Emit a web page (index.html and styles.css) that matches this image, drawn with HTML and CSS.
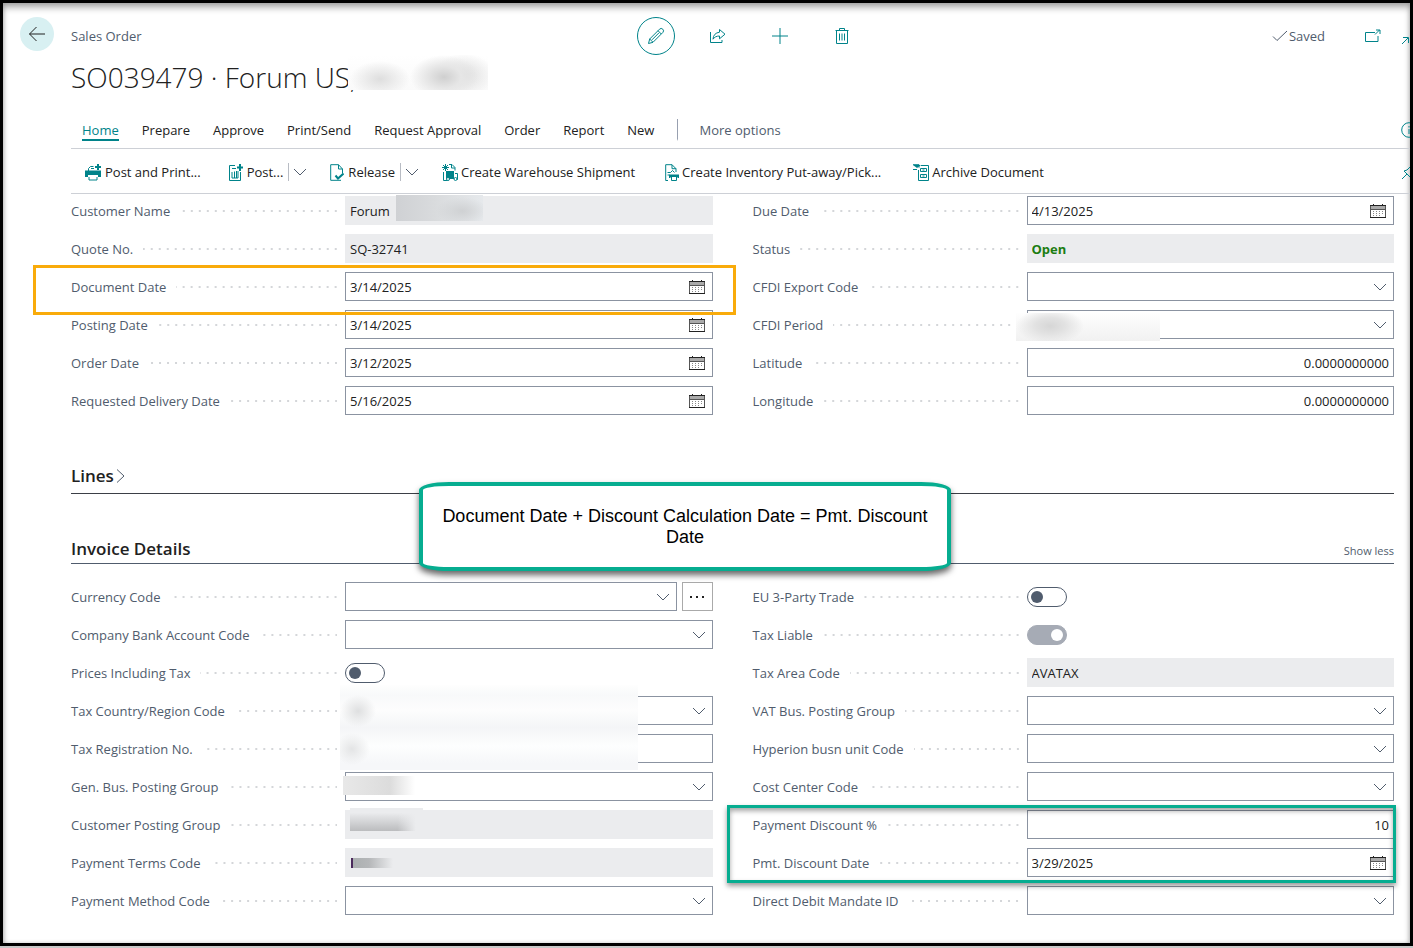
FILE: index.html
```html
<!DOCTYPE html>
<html lang="en">
<head>
<meta charset="utf-8">
<title>Sales Order</title>
<link rel="stylesheet" href="styles.css">
</head>
<body>
<svg class="sprite" aria-hidden="true">
  <symbol id="chevron" viewBox="0 0 14 8"><path d="M1 1l6 6 6-6"/></symbol>
  <symbol id="calendar" viewBox="0 0 16 16"><path d="M.5 2.500v12M15.500 2.500v12" stroke="#555"/><path d="M0 2.500h16M0 14.500h16M3.500 1v3M12.500 1v3"/><path d="M1 4.500h14" stroke="#aaa" stroke-width="3"/><path d="M1 6.500h14" stroke="#555"/><path d="M3 8.500h11M3 10.500h11M3 12.500h8" stroke="#888" stroke-dasharray="1 2"/></symbol>
</svg>
<div class="frame">
  <div class="rail">
    <button class="back" aria-label="Back"><svg width="18" height="16" viewBox="0 0 18 16"><path d="M17 8H1.500M8.500 1L1.500 8l7 7"/></svg></button>
  </div>
  <main class="page">
    <header class="topbar">
      <span class="crumb">Sales Order</span>
      <div class="actions">
        <button class="round" aria-label="Edit"><svg width="18" height="18" viewBox="0 0 18 18"><path d="M1.500 16.500l1.200-4.500L12.500 2.200a2.300 2.300 0 0 1 3.300 3.300L6 15.300zM2.700 12L6 15.300M11 3.700L14.300 7M5 12.800l7-7"/></svg></button>
        <button aria-label="Share"><svg width="18" height="16" viewBox="0 0 18 16"><path d="M1.500 4v10.500h11.500V12M10.500 1.500l5.500 4.700-5.500 4.600V8C7.500 8 5.500 9 4 11.200c.2-4 2.500-6.500 6.500-7z"/></svg></button>
        <button aria-label="New"><svg width="16" height="16" viewBox="0 0 16 16"><path d="M8 0v16M0 8h16"/></svg></button>
        <button aria-label="Delete"><svg width="14" height="18" viewBox="0 0 14 18"><path d="M.5 3.500h13M4.500 3.500v-2h5v2M1.500 3.500v13h11v-13M4.500 6.500v7M7 6.500v7M9.500 6.500v7"/></svg></button>
      </div>
      <div class="state">
        <span class="saved"><svg width="16" height="12" viewBox="0 0 16 12"><path d="M1 6.500l4 4L15 1"/></svg>Saved</span>
        <button class="pop" aria-label="Open in new window"><svg width="16" height="14" viewBox="0 0 16 14"><path d="M10 3.500H.5v9h12.500V7M10 5.500l4.500-4.500M11 1h4v4"/></svg></button>
        <button class="grow" aria-label="Expand"><svg width="16" height="16" viewBox="0 0 16 16"><path d="M1 14l6-6M2 7.500h5.500V13"/></svg></button>
      </div>
    </header>
    <h1 class="title">SO039479 · Forum US,<span class="smudge smudge-title"></span></h1>
    <nav class="tabs">
      <a class="on" href="#">Home</a><a href="#">Prepare</a><a href="#">Approve</a><a href="#">Print/Send</a><a href="#">Request Approval</a><a href="#">Order</a><a href="#">Report</a><a href="#">New</a><a class="more" href="#">More options</a>
      <button class="edge" aria-label="Details"><svg width="16" height="16" viewBox="0 0 16 16"><circle cx="8" cy="8" r="7.300"/><path d="M8 7v5M8 4v1.500"/></svg></button>
    </nav>
    <div class="toolbar">
      <button class="t1"><svg width="16" height="17" viewBox="0 0 16 17"><path class="solid" d="M0 6.500h16v6.500h-3v-2H3v2H0z"/><path d="M3.500 7V4.500l2-2h3M4 13v3h8v-3M6 4.500h3"/><path d="M13 0v6M10 3h6" stroke-width="2"/></svg>Post and Print...</button>
      <button class="t2"><svg width="14" height="17" viewBox="0 0 14 17"><path d="M6 1.500H.5v15h11V8M3 4.500h4M3 8v6h6V7M5.500 14V7.500M7.500 14V7"/><path d="M11 0v7M8 3.500h6" stroke-width="2"/></svg>Post...</button>
      <button class="split" aria-label="More posting options"><svg width="14" height="8"><use href="#chevron"/></svg></button>
      <button class="t3"><svg width="14" height="17" viewBox="0 0 14 17"><path d="M12.500 9V5L8.500.700H.700v15.600H11M8.500.700V5h4"/><path d="M5.500 11.500l2.500 3 5.500-5" stroke-width="2"/></svg>Release</button>
      <button class="split" aria-label="More release options"><svg width="14" height="8"><use href="#chevron"/></svg></button>
      <button class="t4"><svg width="16" height="17" viewBox="0 0 16 17"><path d="M3.500 0v7M0 3.500h7M1 1l5 5M6 1L1 6M7 .500h3l3 3v3M9.500.500V4H13M1.500 8v8.500h4M13 9.500h2.500v6H13"/><path class="solid" d="M4 7h8v8H4z"/><circle class="hole" cx="6" cy="15" r="1.500"/><circle class="hole" cx="13.500" cy="15" r="1.500"/></svg>Create Warehouse Shipment</button>
      <button class="t5"><svg width="14" height="17" viewBox="0 0 14 17"><path d="M3 16.500H.700V.700H7l4 4V8M7 .700v4h4M2.500 8.500h3l2-2 2 2M2.500 11h2M6.500 13v3.500h5V13"/><path class="solid" d="M4 10.500h10V14h-1.500v-1h-7v1H4z"/></svg>Create Inventory Put-away/Pick...</button>
      <button class="t6"><svg width="16" height="17" viewBox="0 0 16 17"><path d="M5.500 6v10.500h10V1.500H8M7.500 4.500h6v3h-6zM7.500 10.500h6v3h-6zM9.500 6h2M9.500 12h2M0 5.500h4M0 .700h6v3"/><path class="solid" d="M0 1l4 3 4-3z"/></svg>Archive Document</button>
      <button class="edge pin" aria-label="Pin"><svg width="16" height="16" viewBox="0 0 16 16"><path d="M1 15l5-5M3 7l6 6M3 7l3-1 4-4M9 13l1-3 4-4M9 1l6 6"/></svg></button>
    </div>

    <section class="body">
      <div class="columns first">
        <div class="col">
          <div class="row"><label for="cust">Customer Name</label><div class="field"><input id="cust" class="ro" value="Forum" readonly><span class="smudge smudge-cust"></span></div></div>
          <div class="row"><label for="quote">Quote No.</label><div class="field"><input id="quote" class="ro" value="SQ-32741" readonly></div></div>
          <div class="row mark-orange"><label for="docd">Document Date</label><div class="field"><input id="docd" value="3/14/2025"><svg class="cal"><use href="#calendar"/></svg></div></div>
          <div class="row"><label for="postd">Posting Date</label><div class="field"><input id="postd" value="3/14/2025"><svg class="cal"><use href="#calendar"/></svg></div></div>
          <div class="row"><label for="ordd">Order Date</label><div class="field"><input id="ordd" value="3/12/2025"><svg class="cal"><use href="#calendar"/></svg></div></div>
          <div class="row"><label for="reqd">Requested Delivery Date</label><div class="field"><input id="reqd" value="5/16/2025"><svg class="cal"><use href="#calendar"/></svg></div></div>
        </div>
        <div class="col">
          <div class="row"><label for="due">Due Date</label><div class="field"><input id="due" value="4/13/2025"><svg class="cal"><use href="#calendar"/></svg></div></div>
          <div class="row"><label for="status">Status</label><div class="field"><input id="status" class="ro open" value="Open" readonly></div></div>
          <div class="row"><label for="cfdi">CFDI Export Code</label><div class="field"><select id="cfdi"></select><svg class="chev"><use href="#chevron"/></svg></div></div>
          <div class="row"><label for="per">CFDI Period</label><div class="field"><select id="per"></select><svg class="chev"><use href="#chevron"/></svg><span class="smudge smudge-period"></span></div></div>
          <div class="row"><label for="lat">Latitude</label><div class="field"><input id="lat" class="num" value="0.0000000000"></div></div>
          <div class="row"><label for="lon">Longitude</label><div class="field"><input id="lon" class="num" value="0.0000000000"></div></div>
        </div>
      </div>

      <div class="lines">
        <h2>Lines<svg width="10" height="16" viewBox="0 0 10 16"><path d="M1 1.500L8 8l-7 6.500"/></svg></h2>
        <p class="callout">Document Date + Discount Calculation Date = Pmt. Discount Date</p>
      </div>
      <div class="invoice"><h2>Invoice Details</h2><button>Show less</button></div>

      <div class="columns">
        <div class="col">
          <div class="row"><label for="cur">Currency Code</label><div class="field with-more"><div class="pick"><select id="cur"></select><svg class="chev"><use href="#chevron"/></svg></div><button class="dots" aria-label="Assist edit"><svg width="16" height="4" viewBox="0 0 16 4"><path d="M1 2h2M7 2h2M13 2h2" stroke-width="2"/></svg></button></div></div>
          <div class="row"><label for="bank">Company Bank Account Code</label><div class="field"><select id="bank"></select><svg class="chev"><use href="#chevron"/></svg></div></div>
          <div class="row"><label for="pit">Prices Including Tax</label><div class="field"><input id="pit" type="checkbox" class="switch"></div></div>
          <div class="row"><label for="tcr">Tax Country/Region Code</label><div class="field"><select id="tcr"></select><svg class="chev"><use href="#chevron"/></svg><span class="smudge smudge-tax"></span></div></div>
          <div class="row"><label for="trn">Tax Registration No.</label><div class="field"><input id="trn"></div></div>
          <div class="row"><label for="gbp">Gen. Bus. Posting Group</label><div class="field"><select id="gbp"></select><svg class="chev"><use href="#chevron"/></svg><span class="smudge smudge-gen"></span></div></div>
          <div class="row"><label for="cpg">Customer Posting Group</label><div class="field"><input id="cpg" class="ro" readonly><span class="smudge smudge-group"></span></div></div>
          <div class="row"><label for="ptc">Payment Terms Code</label><div class="field"><input id="ptc" class="ro" readonly><span class="smudge smudge-terms"></span></div></div>
          <div class="row"><label for="pmc">Payment Method Code</label><div class="field"><select id="pmc"></select><svg class="chev"><use href="#chevron"/></svg></div></div>
        </div>
        <div class="col">
          <div class="row"><label for="eu">EU 3-Party Trade</label><div class="field"><input id="eu" type="checkbox" class="switch"></div></div>
          <div class="row"><label for="tl">Tax Liable</label><div class="field"><input id="tl" type="checkbox" class="switch" checked disabled></div></div>
          <div class="row"><label for="tac">Tax Area Code</label><div class="field"><input id="tac" class="ro" value="AVATAX" readonly></div></div>
          <div class="row"><label for="vat">VAT Bus. Posting Group</label><div class="field"><select id="vat"></select><svg class="chev"><use href="#chevron"/></svg></div></div>
          <div class="row"><label for="hyp">Hyperion busn unit Code</label><div class="field"><select id="hyp"></select><svg class="chev"><use href="#chevron"/></svg></div></div>
          <div class="row"><label for="cc">Cost Center Code</label><div class="field"><select id="cc"></select><svg class="chev"><use href="#chevron"/></svg></div></div>
          <div class="col mark-green">
            <div class="row"><label for="pd">Payment Discount %</label><div class="field"><input id="pd" class="num" value="10"></div></div>
            <div class="row"><label for="pdd">Pmt. Discount Date</label><div class="field"><input id="pdd" value="3/29/2025"><svg class="cal"><use href="#calendar"/></svg></div></div>
          </div>
          <div class="row"><label for="ddm">Direct Debit Mandate ID</label><div class="field"><select id="ddm"></select><svg class="chev"><use href="#chevron"/></svg></div></div>
        </div>
      </div>
    </section>
  </main>
</div>
</body>
</html>
```
FILE: styles.css
```css
* { box-sizing: border-box; }
body {
  margin: 0;
  background: #c8c8c8;
  color: #212121;
  font-family: "Open Sans", "Noto Sans", sans-serif;
  font-size: 13px;
  line-height: 20px;
}
button, input, select { font: inherit; color: inherit; }
button { margin: 0; padding: 0; border: 0; background: none; }
svg { display: block; flex: none; fill: none; stroke: currentColor; stroke-width: 1; }
.sprite { position: absolute; width: 0; height: 0; }
.solid { fill: currentColor; stroke: none; }
.hole { fill: #fff; }

.frame {
  display: flex;
  min-height: calc(100vh - 2px);
  margin-bottom: 2px;
  padding-top: 14px;
  border: 3px solid #000;
  background: #fff;
  box-shadow: inset 0 5px 6px rgba(0, 0, 0, .3), inset 0 0 4px rgba(0, 0, 0, .2);
  overflow: hidden;
}
.rail { flex: none; width: 68px; padding-left: 17px; }
.back {
  display: grid;
  place-items: center;
  width: 34px;
  height: 34px;
  border-radius: 50%;
  background: #d8f0f2;
}
.page { flex: 1; min-width: 0; }

.topbar { display: flex; align-items: center; height: 38px; color: #505c6d; }
.crumb { flex: 1 1 0; }
.actions { display: flex; gap: 24px; margin-left: 9px; color: #00838a; }
.actions button { display: grid; place-items: center; width: 38px; height: 38px; }
.actions .round { border: 1px solid #00838a; border-radius: 50%; }
.state { display: flex; flex: 1 1 0; align-items: center; justify-content: flex-end; margin-right: -7px; }
.saved { display: flex; align-items: center; gap: 1px; }
.pop, .grow, .edge { color: #00838a; }
.pop { margin: 0 20px 0 40px; }
.grow { padding-top: 4px; }

.title {
  display: flex;
  align-items: center;
  height: 44px;
  margin: 0;
  font-size: 28px;
  font-weight: 300;
  line-height: 42px;
}

.tabs {
  display: flex;
  align-items: center;
  gap: 23px;
  height: 37px;
  margin-top: 13px;
  padding-left: 11px;
  border-bottom: 1px solid #cdd0d6;
}
.tabs a { color: inherit; text-decoration: none; border-bottom: 2px solid transparent; line-height: 18px; padding-top: 2px; }
.tabs .on { color: #00838a; border-color: #00838a; }
.tabs .more { padding-left: 21px; border-left: 1px solid #98a0b0; color: #505c6d; }
.edge { margin: 0 -7px 0 auto; }

.toolbar {
  display: flex;
  align-items: center;
  height: 45px;
  padding: 2px 0 0 14px;
  border-bottom: 1px solid #cdd0d6;
}
.toolbar button { display: flex; align-items: center; gap: 4px; white-space: nowrap; }
.toolbar svg { color: #00838a; }
.toolbar .split { height: 18px; margin-left: 5px; padding-left: 4px; border-left: 1px solid #b8bcc4; }
.toolbar .split svg { color: #505c6d; }
.toolbar .t2 { margin-left: 28px; }
.toolbar .t3, .toolbar .t4 { margin-left: 23px; }
.toolbar .t4, .toolbar .t5, .toolbar .t6 { gap: 3px; }
.toolbar .t5 { margin-left: 30px; }
.toolbar .t6 { margin-left: 32px; }

.body { padding-right: 16px; }
.columns { display: grid; grid-template-columns: 1fr 1fr; gap: 40px; padding-top: 18px; }
.first { padding-top: 2px; }
.col { display: flex; flex-direction: column; gap: 9px; min-width: 0; }
.row { display: grid; grid-template-columns: 274px 1fr; height: 29px; }
.row label { display: flex; align-items: center; gap: 10px; color: #505c6d; white-space: nowrap; }
.row label::after {
  content: "";
  flex: 1;
  height: 2px;
  margin-right: 8px;
  background: linear-gradient(90deg, transparent 6px, #d4d6d9 6px) right top / 8px 2px repeat-x;
}
.field, .pick { position: relative; display: flex; align-items: center; min-width: 0; }
.pick { flex: 1; }
.field input:not(.switch), .field select {
  width: 100%;
  height: 29px;
  margin: 0;
  padding: 0 4px;
  border: 1px solid #8b93a1;
  border-radius: 0;
  background: #fff;
  appearance: none;
}
.field input.ro { padding: 0 5px; border: 0; background: #ebecee; }
.field input.open { color: #1c7d12; font-weight: 700; }
.field input.num { text-align: right; }
.chev { position: absolute; right: 7px; width: 14px; height: 8px; color: #505c6d; }
.cal { position: absolute; right: 8px; width: 16px; height: 16px; color: #222; }
.with-more { gap: 5px; align-items: stretch; }
.dots { display: grid; place-items: center; width: 31px; border: 1px solid #aaa; }
.switch {
  appearance: none;
  width: 40px;
  height: 20px;
  margin: 0;
  padding: 3px;
  border: 1px solid #505c6d;
  border-radius: 10px;
}
.switch::before { content: ""; display: block; width: 12px; height: 12px; border-radius: 50%; background: #505c6d; }
.switch:checked { border-color: #a6abb5; background: #a6abb5; }
.switch:checked::before { margin-left: 20px; background: #fff; }

h2 { display: flex; align-items: center; gap: 2px; margin: 0; font-size: 17px; font-weight: 600; line-height: 28px; }
.lines { position: relative; z-index: 2; margin-top: 44px; border-bottom: 1px solid #3b3f46; }
.lines h2 { height: 34px; }
.lines svg { color: #505c6d; }
.invoice { display: flex; align-items: center; justify-content: space-between; margin-top: 41px; border-bottom: 1px solid #505c6d; }
.invoice button { padding-top: 4px; font-size: 11px; color: #505c6d; }

.callout {
  position: absolute;
  top: 23px;
  left: 348px;
  width: 532px;
  height: 89px;
  margin: 0;
  padding: 20px 16px;
  border: 4px solid #06ad90;
  border-radius: 30px / 8px;
  background: #fff;
  box-shadow: 0 4px 6px rgba(0, 0, 0, .6);
  color: #000;
  font: 18px/21px "Liberation Sans", Arial, sans-serif;
  text-align: center;
}
.mark-orange, .mark-green { position: relative; }
.mark-orange::after, .mark-green::after { content: ""; position: absolute; z-index: 1; pointer-events: none; }
.mark-orange::after { inset: -7px -23px -14px -38px; border: 3px solid #f9ab0a; }
.mark-green::after {
  inset: -5px -2px -6px -26px;
  border: 3px solid #06ad90;
  box-shadow: 0 3px 5px rgba(0, 0, 0, .4), inset 0 3px 5px rgba(0, 0, 0, .35);
}

.smudge { position: absolute; z-index: 1; overflow: hidden; }
.smudge-title {
  position: static;
  align-self: flex-start;
  width: 140px;
  height: 35px;
  margin-left: -8px;
  background:
    radial-gradient(ellipse 30px 18px at 32px 24px, #dedede, #fbfbfb00),
    radial-gradient(ellipse 34px 22px at 96px 22px, #cfcfcf, #e6e6e6 50%, #fbfbfb00),
    radial-gradient(ellipse 30px 22px at 116px 20px, #dcdcdc, #fbfbfb00),
    linear-gradient(#fff, #fafafa);
}
.smudge-cust {
  top: -1px;
  left: 51px;
  width: 87px;
  height: 26px;
  background:
    radial-gradient(ellipse 26px 14px at 66px 16px, #cfd1d3, #dfe1e300),
    linear-gradient(90deg, #cfd1d4, #d9dbdd 45%, #e6e9ec);
}
.smudge-period {
  top: 3px;
  left: -11px;
  width: 144px;
  height: 28px;
  background:
    radial-gradient(ellipse 34px 18px at 34px 13px, #d6d6d6, #e2e2e2 45%, #f8f8f800),
    linear-gradient(#fefefe, #f1f1f1);
}
.smudge-tax {
  top: -11px;
  left: -5px;
  width: 298px;
  height: 85px;
  background:
    radial-gradient(ellipse 18px 16px at 18px 26px, #dedfe0, #fafafa00),
    radial-gradient(ellipse 18px 16px at 12px 64px, #e3e4e5, #fafafa00),
    linear-gradient(#fefefe, #f8f9fa 12%, #fdfdfd 30%, #f4f5f7 50%, #fdfefe 72%, #f6f7f9 92%);
}
.smudge-gen {
  top: 4px;
  left: -2px;
  width: 72px;
  height: 19px;
  background: linear-gradient(90deg, #e8e8e8, #dcdcdc 65%, #fff);
}
.smudge-group {
  top: -2px;
  left: 5px;
  width: 73px;
  height: 23px;
  background: linear-gradient(90deg, #ebecee00 65%, #ebecee 90%), linear-gradient(#ebecee 20%, #bbbcbe);
}
.smudge-terms {
  top: 10px;
  left: 6px;
  width: 42px;
  height: 10px;
  border-left: 2px solid #4b2a5c;
  background: linear-gradient(90deg, #abafb0, #b5b7b9 40%, #ebecee);
}
```
